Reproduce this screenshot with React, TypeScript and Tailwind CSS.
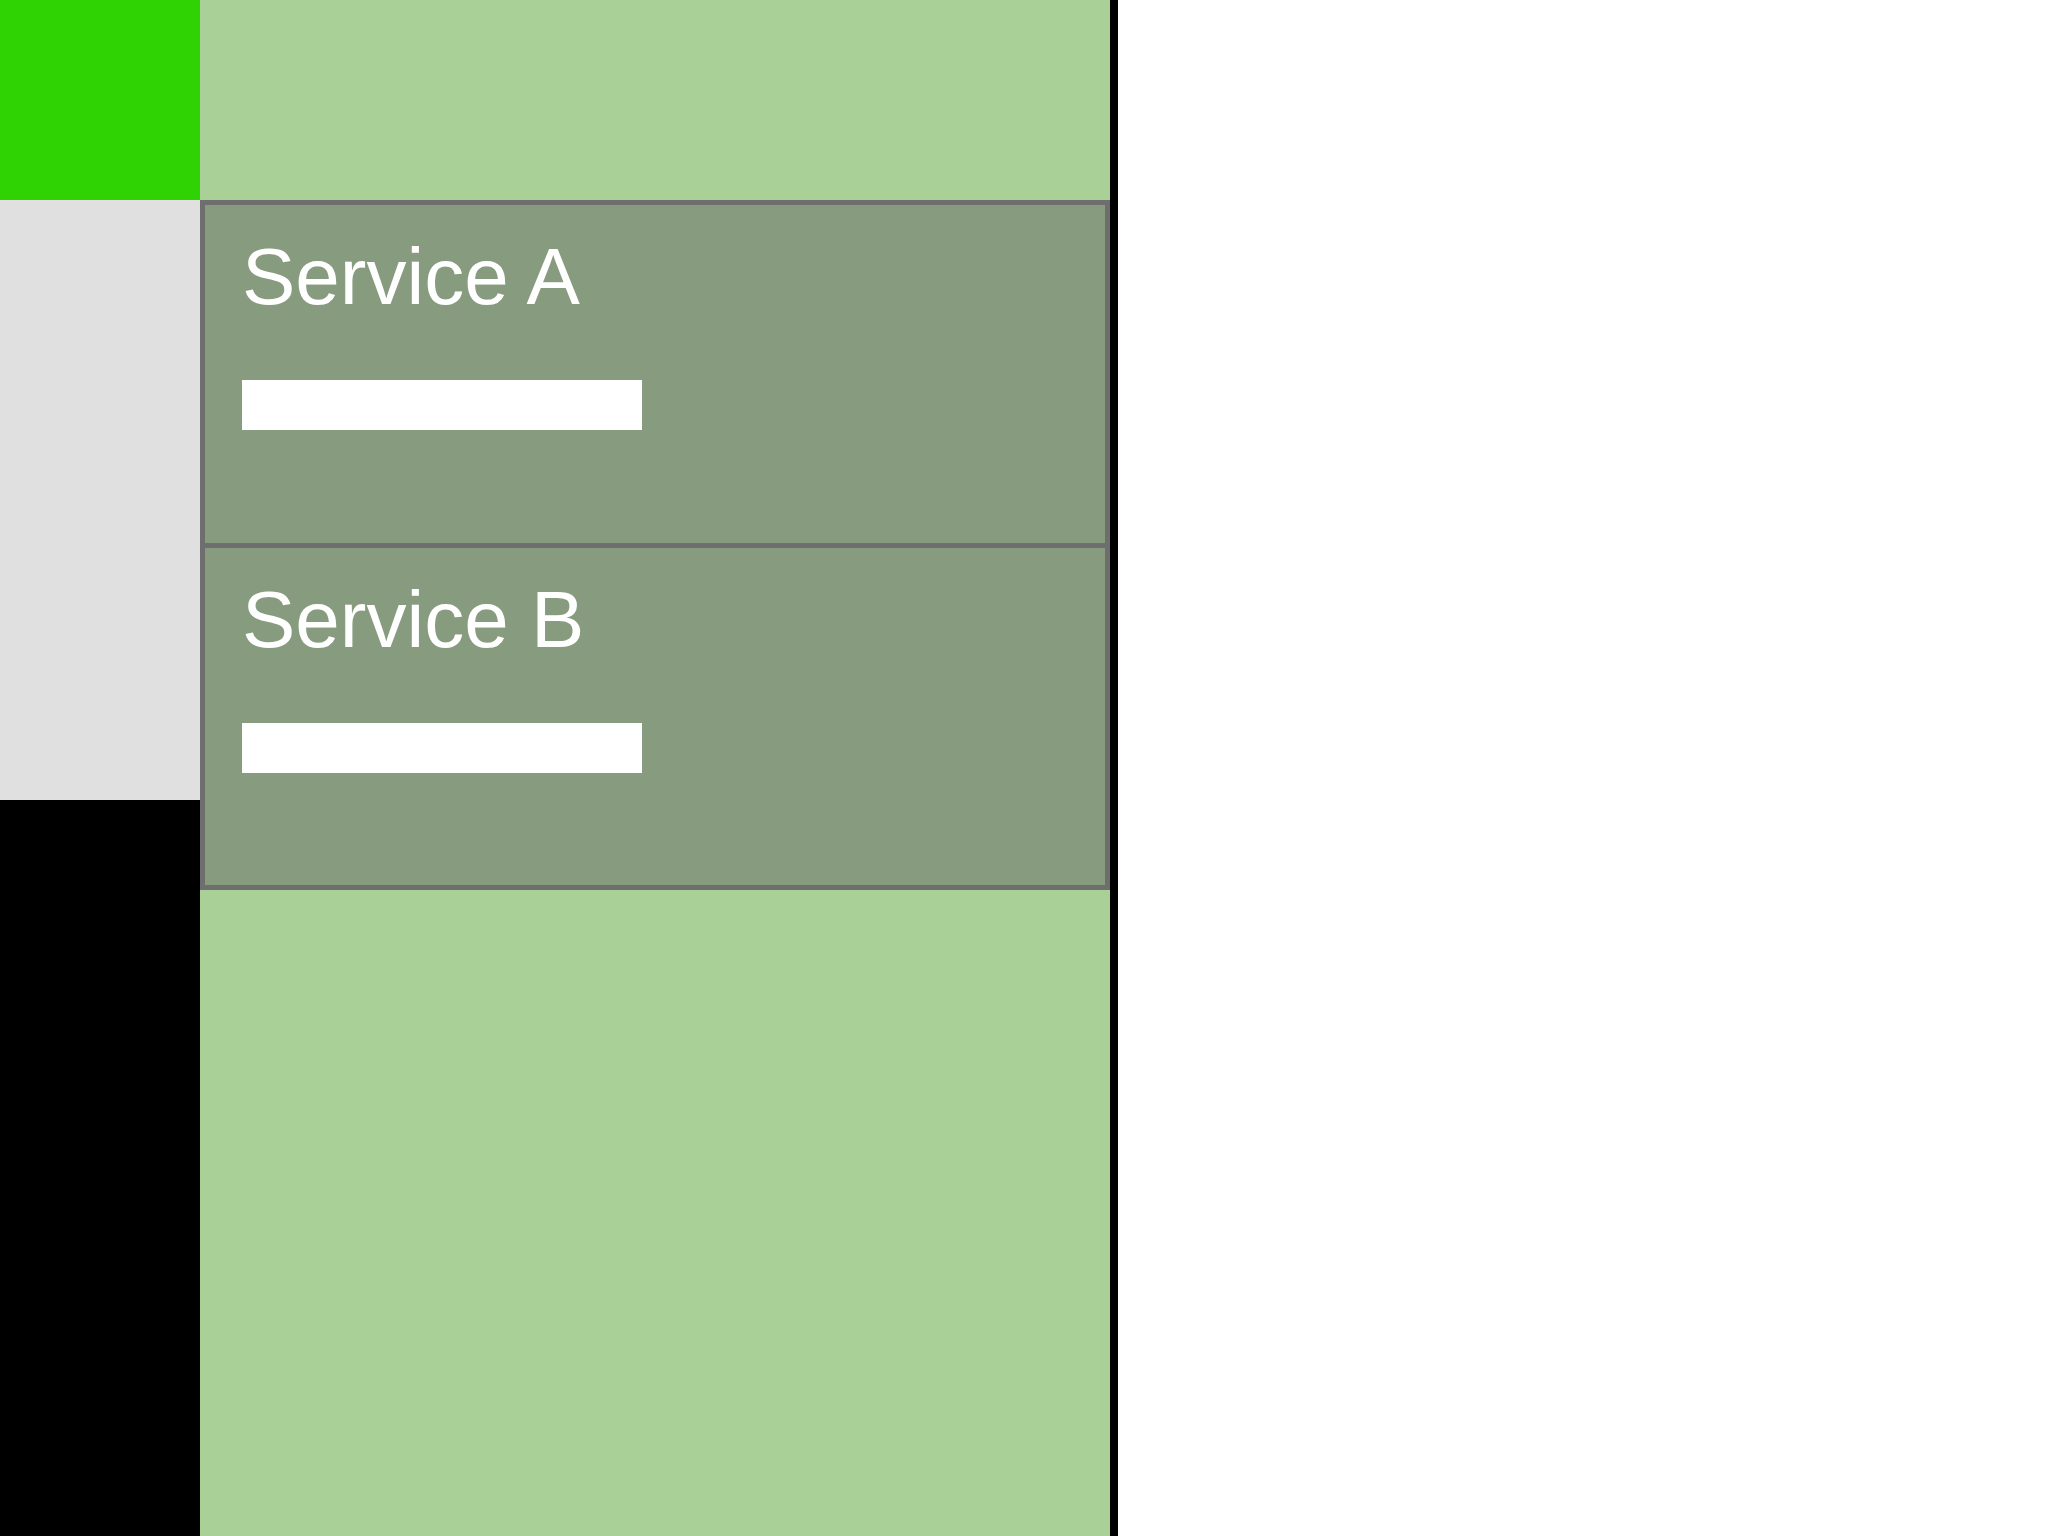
const services = ['Service A', 'Service B']

export default function App() {
  return (
    <div className="flex h-[1536px] w-[2048px] bg-white font-['Liberation_Sans',Arial,sans-serif]">
      <div className="flex w-[200px] shrink-0 flex-col">
        <div className="h-[200px] bg-[#2fd304]" />
        <div className="h-[600px] bg-[#e0e0e0]" />
        <div className="flex-1 bg-black" />
      </div>
      <div className="flex w-[910px] shrink-0 flex-col bg-[#a9d197] pt-[200px]">
        {services.map((name, i) => (
          <div
            key={name}
            className={
              i === 0
                ? 'h-[348px] border-[5px] border-[#6e6e6e] bg-[#879b7e] px-[37px] pt-[26px]'
                : 'h-[342px] border-[5px] border-t-0 border-[#6e6e6e] bg-[#879b7e] px-[37px] pt-[26px]'
            }
          >
            <div className="text-[80px] leading-[92px] text-white">{name}</div>
            <div className="mt-[57px] h-[50px] w-[400px] bg-white" />
          </div>
        ))}
      </div>
      <div className="w-[8px] shrink-0 bg-black" />
      <div className="flex-1 bg-white" />
    </div>
  )
}
